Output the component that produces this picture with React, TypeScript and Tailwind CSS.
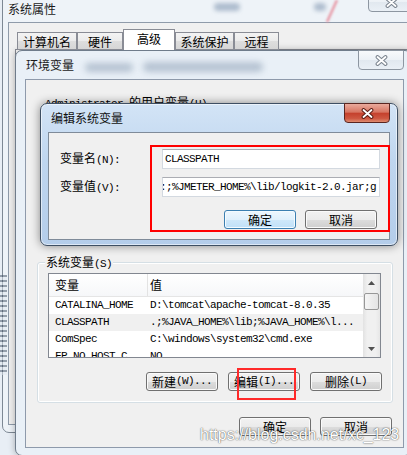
import type { ReactNode } from "react";

const cjk = "font-['Noto_Sans_CJK_SC',sans-serif]";
const mono = "font-['Liberation_Mono',monospace] text-[11px] tracking-[-0.6px]";

const tabs = [
  { label: "计算机名", width: "w-[60px]" },
  { label: "硬件", width: "w-[46px]" },
  { label: "高级", width: "w-[52px]", active: true },
  { label: "系统保护", width: "w-[59px]" },
  { label: "远程", width: "w-[45px]" },
];

const systemVars = [
  { name: "CATALINA_HOME", value: "D:\\tomcat\\apache-tomcat-8.0.35" },
  { name: "CLASSPATH", value: ".;%JAVA_HOME%\\lib;%JAVA_HOME%\\l...", selected: true },
  { name: "ComSpec", value: "C:\\windows\\system32\\cmd.exe" },
  { name: "FP_NO_HOST_C", value: "NO" },
];

function CloseGlyph({ active }: { active?: boolean }) {
  const d = "M2.5 2 L10.5 9 M10.5 2 L2.5 9";
  return (
    <svg width="13" height="11" viewBox="0 0 13 11">
      <path d={d} stroke={active ? "#5b1d15" : "#7a838e"} strokeWidth="3.8" strokeLinecap="round" fill="none" />
      <path d={d} stroke="#ffffff" strokeWidth="1.8" strokeLinecap="round" fill="none" />
    </svg>
  );
}

function CloseButton({ active, className }: { active?: boolean; className: string }) {
  return (
    <div
      className={`absolute top-[-1px] flex h-[20px] w-[46px] items-center justify-center rounded-b-[4px] border ${
        active
          ? "border-[#5a2520] bg-[linear-gradient(#eaaa9c,#d77562_45%,#c5412d_52%,#cd5741_80%,#df8c70)]"
          : "border-[#8d96a1] bg-[linear-gradient(#f8fafc,#ecf1f6_50%,#e1e8ef_50%,#eaf0f6)]"
      } ${className}`}
    >
      <CloseGlyph active={active} />
    </div>
  );
}

function Button({ children, primary }: { children: ReactNode; primary?: boolean }) {
  return (
    <div
      className={`flex h-[19px] w-[72px] items-center justify-center rounded-[3px] border leading-none ${
        primary
          ? "border-[#3c7fb1] bg-[linear-gradient(#eef7fe,#e0f0fc_50%,#cfe8fa_50%,#c0e0f8)] shadow-[inset_0_0_0_1px_#f4fbff]"
          : "border-[#707070] bg-[linear-gradient(#f2f2f2,#ebebeb_50%,#dddddd_50%,#cfcfcf)] shadow-[inset_0_0_0_1px_#fafafa]"
      }`}
    >
      {children}
    </div>
  );
}

function SystemPropertiesWindow() {
  return (
    <div className="absolute left-[2px] top-[-8px] flex h-[441px] w-[430px] flex-col rounded-[7px] border border-[#7d8894] bg-[#eef3f8]">
      <div className="h-[29px] pl-[5px] pt-[9px] leading-[14px] text-[#1a1a1a]">系统属性</div>
      <div className="mb-[7px] ml-[5px] flex flex-1 flex-col border border-[#8f9baa] bg-[#f0f0f0]">
        <div className="relative z-10 -mb-px flex items-end pl-[8px] pt-[6px]">
          {tabs.map((tab) =>
            tab.active ? (
              <div
                key={tab.label}
                className={`flex h-[21px] items-center justify-center border-x border-t border-[#898c95] bg-white pb-[3px] ${tab.width}`}
              >
                {tab.label}
              </div>
            ) : (
              <div
                key={tab.label}
                className={`flex h-[18px] items-center justify-center border border-[#898c95] bg-[linear-gradient(#f3f3f3,#ebebeb_50%,#dedede_50%,#d6d6d6)] pt-[1px] ${tab.width}`}
              >
                {tab.label}
              </div>
            ),
          )}
        </div>
        <div className="mb-[11px] ml-[6px] flex-1 border border-[#898c95] bg-white" />
      </div>
      <CloseButton className="right-[17px]" />
    </div>
  );
}

function Scrollbar() {
  return (
    <div className="flex w-[17px] flex-col bg-[linear-gradient(90deg,#e2e2e2,#f0f0f0_25%,#f0f0f0_75%,#e6e6e6)]">
      <div className="flex h-[17px] items-center justify-center">
        <svg width="7" height="4" viewBox="0 0 7 4">
          <path d="M0 4 L3.5 0 L7 4 Z" fill="#505050" />
        </svg>
      </div>
      <div className="mx-px mt-[2px] h-[17px] rounded-[2px] border border-[#979797] bg-[linear-gradient(90deg,#f5f5f5,#e4e4e4)]" />
      <div className="flex-1" />
      <div className="flex h-[17px] items-center justify-center">
        <svg width="7" height="4" viewBox="0 0 7 4">
          <path d="M0 0 L3.5 4 L7 0 Z" fill="#505050" />
        </svg>
      </div>
    </div>
  );
}

function VariableList() {
  return (
    <div className="ml-[10px] flex h-[85px] w-[333px] border border-[#828790] bg-white">
      <div className="flex-1 overflow-hidden">
        <div className="flex h-[23px] items-center border-b border-[#e5e5e5] bg-[linear-gradient(#ffffff,#f6f7f9)]">
          <div className="flex h-full w-[99px] items-center border-r border-[#e3e3e3] pl-[6px]">变量</div>
          <div className="pl-[2px]">值</div>
        </div>
        {systemVars.map((row) => (
          <div
            key={row.name}
            className={`flex h-[17px] items-center whitespace-nowrap ${mono} ${row.selected ? "bg-[#f0f0f0]" : ""}`}
          >
            <div className="w-[99px] pl-[6px]">{row.name}</div>
            <div className="pl-[2px]">{row.value}</div>
          </div>
        ))}
      </div>
      <Scrollbar />
    </div>
  );
}

function EnvironmentDialog() {
  return (
    <div className="absolute left-[15px] top-[50px] flex h-[406px] w-[397px] flex-col rounded-[7px] border border-[#6f7c8b] bg-[#e9f0f7] shadow-[0_0_7px_rgba(0,0,0,0.3)]">
      <div className="h-[28px] pl-[10px] pt-[7px] leading-[14px] text-[#1a1a1a]">环境变量</div>
      <CloseButton className="right-[7px]" />
      <div className="mb-[7px] ml-[9px] mr-[7px] flex flex-1 flex-col border border-[#8e9aab] bg-[#f0f0f0]">
        <div className="h-[182px] whitespace-nowrap pl-[19px] pt-[15px] leading-[14px]">
          <span className={mono}>Administrator </span>的用户变量<span className={mono}>(U)</span>
        </div>

        <div className="relative ml-[11px] mr-[10px] h-[141px] rounded-[3px] border border-[#d5dfe5] shadow-[inset_0_0_0_1px_#ffffff]">
          <div className="absolute left-[7px] top-[-8px] whitespace-nowrap bg-[#f0f0f0] px-px leading-[14px]">
            系统变量<span className={mono}>(S)</span>
          </div>
          <div className="pt-[10px]">
            <VariableList />
          </div>
          <div className="mt-[14px] flex justify-end gap-[10px] pr-[10px]">
            <Button>
              新建<span className={mono}>(W)...</span>
            </Button>
            <Button>
              编辑<span className={mono}>(I)...</span>
            </Button>
            <Button>
              删除<span className={mono}>(L)</span>
            </Button>
          </div>
        </div>

        <div className="mt-[14px] flex justify-end gap-[9px] pr-[11px]">
          <Button>确定</Button>
          <Button>取消</Button>
        </div>
      </div>
    </div>
  );
}

function EditDialog() {
  return (
    <div className="absolute left-[40px] top-[103px] flex h-[143px] w-[358px] flex-col rounded-[7px] border border-[#3e4f63] bg-[linear-gradient(180deg,#d3e4f6_0%,#bfd6ef_40%,#b4cdea_100%)] shadow-[0_0_10px_rgba(0,0,0,0.45),inset_0_0_0_1px_rgba(255,255,255,0.55)]">
      <div className="h-[28px] pl-[10px] pt-[7px] leading-[14px] text-[#111]">编辑系统变量</div>
      <CloseButton active className="right-[7px]" />
      <div className="mb-[5px] ml-[7px] mr-[7px] flex flex-1 flex-col border border-[#7f8b99] bg-[#f0f0f0]">
        <div className="mt-[16px] flex items-center pl-[11px]">
          <div className="w-[102px] whitespace-nowrap leading-[14px]">
            变量名<span className={mono}>(N):</span>
          </div>
          <div className={`flex h-[20px] w-[218px] items-center border border-[#d3d9e0] border-t-[#abadb3] bg-white pl-[2px] ${mono}`}>
            CLASSPATH
          </div>
        </div>
        <div className="mt-[8px] flex items-center pl-[11px]">
          <div className="w-[102px] whitespace-nowrap leading-[14px]">
            变量值<span className={mono}>(V):</span>
          </div>
          <div className={`flex h-[20px] w-[218px] items-center justify-end overflow-hidden whitespace-nowrap border border-[#d3d9e0] border-t-[#abadb3] bg-white pr-[2px] ${mono}`}>
            <span>:;%JMETER_HOME%\lib/logkit-2.0.jar;g</span>
            <span className="ml-px h-[13px] w-px bg-black" />
          </div>
        </div>
        <div className="mt-[13px] flex justify-end gap-[9px] pr-[12px]">
          <Button primary>确定</Button>
          <Button>取消</Button>
        </div>
      </div>
    </div>
  );
}

export default function App() {
  return (
    <div className={`relative h-[455px] w-[407px] overflow-hidden bg-[#e8eef5] text-[12px] text-black ${cjk}`}>
      <SystemPropertiesWindow />

      {/* glass reflections of what sits behind the inactive frames */}
      <div className="absolute left-[214px] top-[3px] h-[8px] w-[26px] rounded-full bg-[#6f87a6]/50 blur-[2px]" />
      <div className="absolute left-[314px] top-[3px] h-[8px] w-[12px] rounded-full bg-[#6f87a6]/50 blur-[2px]" />
      <svg className="absolute left-[322px] top-0 blur-[1px]" width="20" height="24" viewBox="0 0 20 24">
        <path d="M15 0 L5 22" stroke="#e79aa8" strokeWidth="2.5" />
      </svg>
      <div className="absolute left-0 top-[275px] h-[100px] w-[7px] bg-[repeating-linear-gradient(180deg,#3b4a5e_0px,#3b4a5e_2px,#dfe6ee_2px,#dfe6ee_5px)] opacity-50" />

      <EnvironmentDialog />

      <div className="absolute left-[85px] top-[63px] h-[9px] w-[48px] rounded-full bg-[#8d9fb5]/55 blur-[3px]" />
      <div className="absolute left-[143px] top-[62px] h-[10px] w-[120px] rounded-full bg-[#8d9fb5]/55 blur-[3px]" />

      <EditDialog />

      <div className="absolute left-[150px] top-[145px] h-[87px] w-[240px] border-2 border-[#ff0000]" />
      <div className="absolute left-[237px] top-[368px] h-[32px] w-[59px] border-2 border-[#ff2a2a]" />

      <div className="absolute left-[200px] top-[426px] whitespace-nowrap font-['Liberation_Sans',sans-serif] text-[16px] leading-[18px] text-white [text-shadow:0_0_1px_rgba(0,0,0,0.7),0_0_2px_rgba(0,0,0,0.35)]">
        https://blog.csdn.net/xc_123
      </div>
    </div>
  );
}
